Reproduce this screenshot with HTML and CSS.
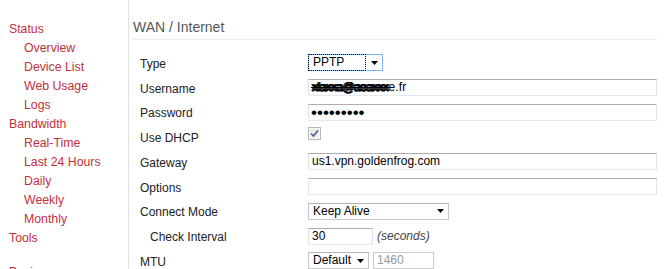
FILE: index.html
```html
<!DOCTYPE html>
<html lang="en">
<head>
  <meta charset="UTF-8">
  <title>WAN / Internet</title>
  <link rel="stylesheet" href="styles.css">
</head>
<body>
<div class="page">

  <!-- menu -->
  <nav class="navi">
    <div class="group">
      <a class="top" href="#">Status</a>
      <a class="sub" href="#">Overview</a>
      <a class="sub" href="#">Device List</a>
      <a class="sub" href="#">Web Usage</a>
      <a class="sub" href="#">Logs</a>
      <a class="top" href="#">Bandwidth</a>
      <a class="sub" href="#">Real-Time</a>
      <a class="sub" href="#">Last 24 Hours</a>
      <a class="sub" href="#">Daily</a>
      <a class="sub" href="#">Weekly</a>
      <a class="sub" href="#">Monthly</a>
      <a class="top" href="#">Tools</a>
    </div>
    <div class="group">
      <a class="top" href="#">Basic</a>
    </div>
  </nav>

  <!-- content -->
  <main class="content">
    <h1 class="section-title">WAN / Internet</h1>

    <div class="form">
      <div class="label">Type</div>
      <div class="value">
        <div class="select focus w-type">
          <span class="sel-value">PPTP</span>
          <span class="arrow"><svg width="7" height="4" viewBox="0 0 7 4"><polygon points="0,0 7,0 3.5,4" fill="#000"/></svg></span>
        </div>
      </div>

      <div class="label">Username</div>
      <div class="value">
        <div class="field"><span class="scribble">xlaxxa@aoaxxx</span><span class="plain">e.fr</span></div>
      </div>

      <div class="label">Password</div>
      <div class="value">
        <div class="field pass">•••••••••</div>
      </div>

      <div class="label">Use DHCP</div>
      <div class="value">
        <span class="check">
          <svg width="9" height="9" viewBox="0 0 9 9"><path d="M1 4.5 L3.5 7 L8 1.5" fill="none" stroke="#4b5f95" stroke-width="1.6"/></svg>
        </span>
      </div>

      <div class="label">Gateway</div>
      <div class="value">
        <div class="field">us1.vpn.goldenfrog.com</div>
      </div>

      <div class="label">Options</div>
      <div class="value">
        <div class="field"></div>
      </div>

      <div class="label">Connect Mode</div>
      <div class="value">
        <div class="select w-mode">
          <span class="sel-value">Keep Alive</span>
          <span class="arrow"><svg width="7" height="4" viewBox="0 0 7 4"><polygon points="0,0 7,0 3.5,4" fill="#000"/></svg></span>
        </div>
      </div>

      <div class="label indent">Check Interval</div>
      <div class="value">
        <div class="field w-short">30</div>
        <span class="note">(seconds)</span>
      </div>

      <div class="label">MTU</div>
      <div class="value">
        <div class="select w-mtu">
          <span class="sel-value">Default</span>
          <span class="arrow"><svg width="7" height="4" viewBox="0 0 7 4"><polygon points="0,0 7,0 3.5,4" fill="#000"/></svg></span>
        </div>
        <div class="field disabled w-mtu">1460</div>
      </div>
    </div>
  </main>

</div>
</body>
</html>
```

FILE: styles.css
```css
* { box-sizing: border-box; }

body {
  margin: 0;
  background: #fff;
  font-family: "Liberation Sans", Arial, sans-serif;
  font-size: 12px;
  color: #222;
}

.page {
  display: flex;
  height: 100vh;
  overflow: hidden;
}

/* MENU */

.navi {
  width: 129px;
  flex-shrink: 0;
  border-right: 1px solid #e4e4e4;
  padding-top: 20px;
}

.group {
  display: flex;
  flex-direction: column;
  margin-bottom: 15px;
}

.navi a {
  display: block;
  height: 19px;
  line-height: 19px;
  font-size: 12.3px;
  color: #c0313c;
  text-decoration: none;
  white-space: nowrap;
}

.navi .top { padding-left: 9px; }
.navi .sub { padding-left: 24px; }

/* CONTENT */

.content {
  flex: 1;
  padding: 19px 11px 0 4px;
}

.section-title {
  margin: 0;
  font-size: 14px;
  font-weight: normal;
  line-height: 16px;
  color: #555;
  padding-bottom: 4px;
  border-bottom: 1px solid #ececec;
}

.form {
  display: grid;
  grid-template-columns: 168px 1fr;
  grid-auto-rows: 24.75px;
  align-items: center;
  margin-top: 10.5px;
  padding-left: 7px;
}

.label {
  padding-top: 2px;
  color: #222;
}

.label.indent { padding-left: 10px; }

.value {
  display: flex;
  align-items: center;
  gap: 4px;
}

.field {
  width: 100%;
  height: 17px;
  line-height: 15px;
  padding: 0 3px;
  border: 1px solid;
  border-color: #abadb3 #e2e3ea #e3e9ef #e2e3ea;
  background: #fff;
  color: #000;
  white-space: nowrap;
  overflow: hidden;
}

.field.pass {
  font-size: 17px;
  line-height: 15px;
  padding-left: 2px;
  overflow: visible;
}

.field.disabled {
  border-color: #ccc;
  color: #999;
}

.scribble {
  letter-spacing: -0.6px;
  text-decoration: line-through;
  text-shadow: 1px 0 #000, -1px 0 #000, 0 1px #333;
}

.plain { letter-spacing: 0.2px; }

.select {
  display: flex;
  align-items: center;
  height: 17px;
  border: 1px solid #c8c8c8;
  border-top-color: #b4b4b4;
  background: #fff;
  color: #000;
}

.select.focus { border-color: #7eb4ea; }

.sel-value {
  flex: 1;
  padding-left: 4px;
  line-height: 15px;
}

.select.focus .sel-value {
  align-self: stretch;
  margin: -1px 0 -1px -1px;
  padding-left: 4px;
  line-height: 15px;
  border: 1px dotted #000;
}

.arrow {
  width: 16px;
  display: flex;
  justify-content: center;
  align-items: center;
}

.arrow svg { display: block; }

.w-type { width: 75px; }
.w-mode { width: 141px; }
.w-short { width: 65px; }
.w-mtu { width: 61px; flex-shrink: 0; }

.note {
  font-style: italic;
  color: #444;
}

.check {
  width: 13px;
  height: 13px;
  margin-top: -7px;
  border: 1px solid #b7b7b7;
  background: linear-gradient(#e6e6e6, #f6f6f6);
  box-shadow: inset 0 0 0 1px #fafafa;
  display: flex;
  align-items: center;
  justify-content: center;
}
```
